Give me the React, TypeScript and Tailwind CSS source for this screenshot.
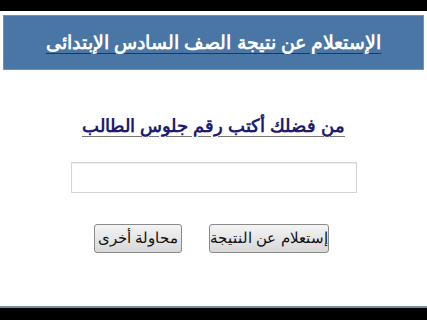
export default function App() {
  return (
    <div className="w-[427px] h-[320px] bg-black flex flex-col overflow-hidden" dir="rtl" style={{ fontFamily: '"Liberation Sans", Arial, sans-serif' }}>
      <div className="h-[11px] shrink-0" />
      <div className="flex-1 bg-white flex flex-col pt-[4px] pl-[3px] pr-[3px]">
        <div className="h-[55px] bg-[#4a76a6] border border-[#6f93bb] flex items-center justify-center">
          <h1 className="text-[19px] font-bold text-white underline underline-offset-[4px] decoration-[#2a3550] pt-[2px]">
            الإستعلام عن نتيجة الصف السادس الإبتدائى
          </h1>
        </div>
        <div className="flex flex-col items-center pt-[43px]">
          <p className="text-[18px] font-bold text-[#1c1c72] underline underline-offset-[4px] decoration-[#777]">
            من فضلك أكتب رقم جلوس الطالب
          </p>
          <input
            className="mt-[22px] w-[286px] h-[31px] border border-[#d4d4d4] shadow-[inset_0_1px_1px_rgba(0,0,0,0.08)] outline-none ml-[1px]"
            type="text"
          />
          <div className="flex gap-[27px] mt-[31px] mr-[4px]">
            <button className="w-[120px] h-[29px] rounded-[3px] border border-[#8a8a8a] bg-gradient-to-b from-[#f4f4f4] to-[#d8d8d8] text-[15px] text-[#111]">
              إستعلام عن النتيجة
            </button>
            <button className="w-[88px] h-[29px] rounded-[3px] border border-[#8a8a8a] bg-gradient-to-b from-[#f4f4f4] to-[#d8d8d8] text-[15px] text-[#111]">
              محاولة أخرى
            </button>
          </div>
        </div>
      </div>
      <div className="h-[2px] bg-[#7a8ea3] shrink-0" />
      <div className="h-[12px] shrink-0" />
    </div>
  );
}
